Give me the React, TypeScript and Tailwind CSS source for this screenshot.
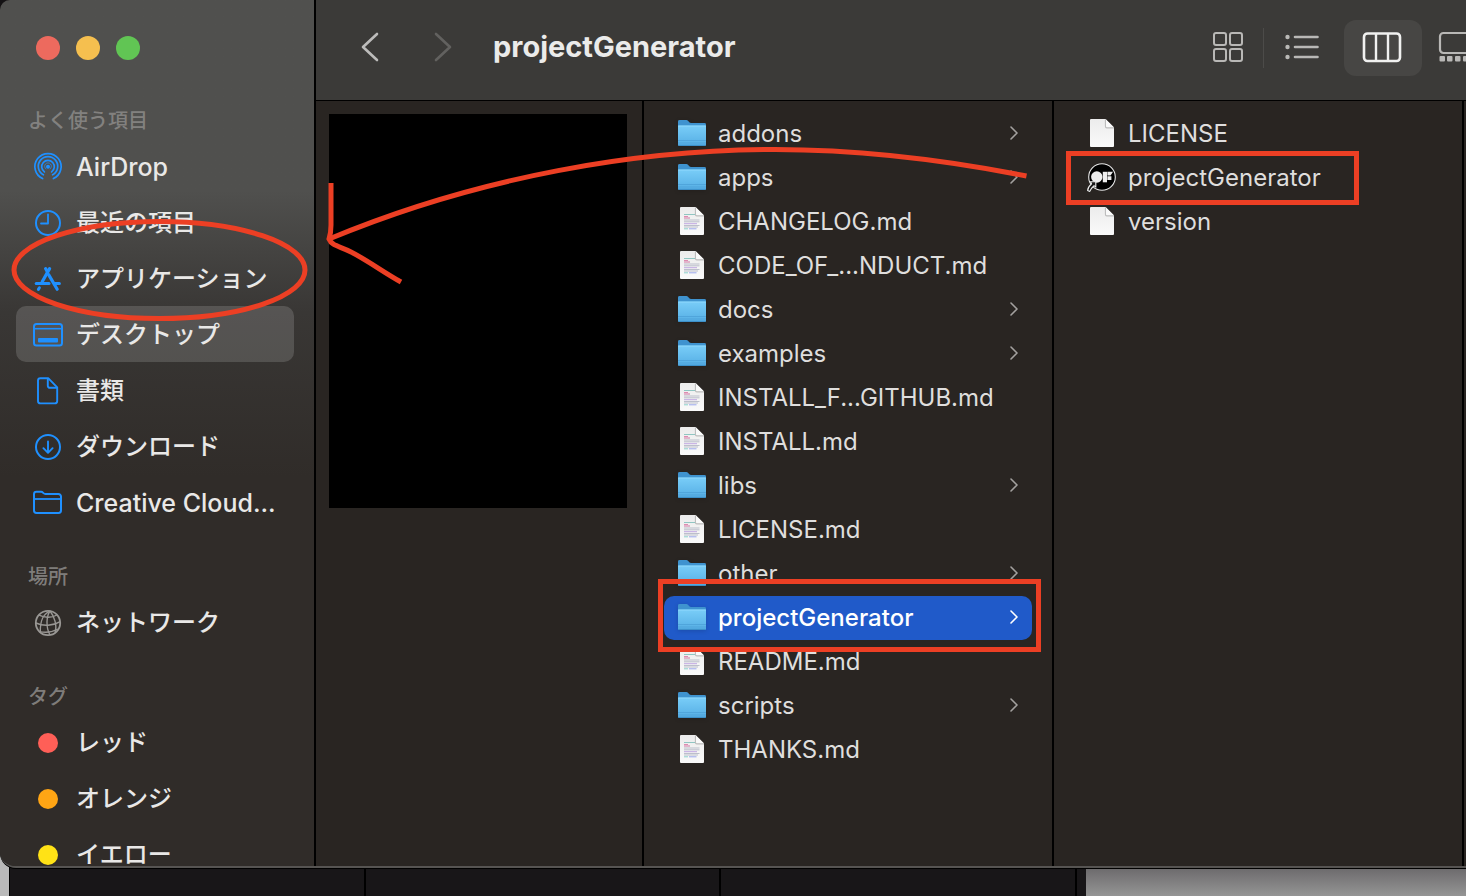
import type { ReactNode } from "react";

function Svg({ w, h, children, className = "" }: { w: number; h: number; children: ReactNode; className?: string }) {
  return (
    <svg width={w} height={h} viewBox={`0 0 ${w} ${h}`} fill="none" aria-hidden="true" className={`shrink-0 ${className}`}>
      {children}
    </svg>
  );
}

/* ---------- sidebar icons, all on a 32 x 32 grid ---------- */

const airdrop = (
  <Svg w={32} h={32}>
    <g stroke="currentColor" strokeWidth="1.7" strokeLinecap="round">
      <path d="M10.6 27.6A13.1 13.1 0 1 1 21.4 27.6" />
      <path d="M11.4 23.8A9.7 9.7 0 1 1 20.6 23.8" />
      <path d="M12.4 20.9A6.3 6.3 0 1 1 19.6 20.9" />
      <path d="M13.9 18A3.4 3.4 0 1 1 18.1 18" strokeWidth="1" strokeOpacity="0.7" />
    </g>
    <circle cx="16" cy="15.8" r="2" fill="currentColor" />
  </Svg>
);

const clock = (
  <Svg w={32} h={32}>
    <circle cx="16" cy="16" r="12" stroke="currentColor" strokeWidth="2" />
    <path d="M16 7.5V16.5H9" stroke="currentColor" strokeWidth="1.8" strokeLinecap="round" strokeLinejoin="round" />
  </Svg>
);

const appStore = (
  <Svg w={32} h={32}>
    <g stroke="currentColor" strokeWidth="3.2" strokeLinecap="round">
      <path d="M17.6 5.6L10.2 18.8" />
      <path d="M13.6 5.6L14.9 8" />
      <path d="M16.6 11.6L25.2 26.2" />
      <path d="M4.2 20.4H17" strokeWidth="3" />
      <path d="M22.6 20.4H27.4" strokeWidth="3" />
      <path d="M7.4 24.8L6.4 26.4" strokeWidth="3" />
    </g>
  </Svg>
);

const desktop = (
  <Svg w={32} h={32}>
    <rect x="2" y="5" width="28" height="21.5" rx="2.5" stroke="currentColor" strokeWidth="2" />
    <path d="M2 9.7H30" stroke="currentColor" strokeWidth="1.6" />
    <rect x="6" y="19" width="20" height="4.4" rx="1" fill="currentColor" />
  </Svg>
);

const documentIcon = (
  <Svg w={32} h={32}>
    <g stroke="currentColor" strokeWidth="1.9" strokeLinejoin="round">
      <path d="M8.4 3.2H16.2L25.2 12.4V26a2.4 2.4 0 0 1-2.4 2.4H8.4A2.4 2.4 0 0 1 6 26V5.6a2.4 2.4 0 0 1 2.4-2.4Z" />
      <path d="M15.8 3.4V10.8a2 2 0 0 0 2 2H25" />
    </g>
  </Svg>
);

const download = (
  <Svg w={32} h={32}>
    <circle cx="16" cy="16" r="12" stroke="currentColor" strokeWidth="2" />
    <path d="M16 10.4V21.6M11.4 17.2L16 21.8L20.6 17.2" stroke="currentColor" strokeWidth="1.9" strokeLinecap="round" strokeLinejoin="round" />
  </Svg>
);

const folderOutline = (
  <Svg w={32} h={32}>
    <path
      d="M2 7.2A2.4 2.4 0 0 1 4.4 4.8H9.2c1.8 0 2.2 2.2 4.2 2.2H26.4A2.6 2.6 0 0 1 29 9.6V23.6A2.4 2.4 0 0 1 26.6 26H4.4A2.4 2.4 0 0 1 2 23.6Z"
      stroke="currentColor"
      strokeWidth="2"
    />
    <path d="M2 12H29" stroke="currentColor" strokeWidth="1.8" />
  </Svg>
);

const network = (
  <Svg w={32} h={32} className="text-[#999794]">
    <g stroke="currentColor" strokeWidth="1.4">
      <circle cx="16" cy="16" r="12.2" strokeWidth="1.8" />
      <path d="M18 4C11.5 7 8 12.500 8.300 25.400" />
      <path d="M18 4C14.500 9 13.500 20 18 28" />
      <path d="M18 4C22 9 25.500 18 23 25.600" />
      <path d="M7 8.200C12 10.600 19.500 11.400 24.800 8" />
      <path d="M4 16C11 19.500 21 19 28.200 14.600" />
      <path d="M7.400 24.600C12 25.600 20 25.400 25.800 22" />
    </g>
  </Svg>
);

function TagDot({ className }: { className: string }) {
  return (
    <span className="flex size-8 shrink-0 items-center justify-center">
      <span className={`size-5 rounded-full ${className}`} />
    </span>
  );
}

type SideItem = { label: string; icon: ReactNode; active?: boolean; latin?: boolean };

const sections: { title: string; items: SideItem[] }[] = [
  {
    title: "よく使う項目",
    items: [
      { label: "AirDrop", icon: airdrop, latin: true },
      { label: "最近の項目", icon: clock },
      { label: "アプリケーション", icon: appStore },
      { label: "デスクトップ", icon: desktop, active: true },
      { label: "書類", icon: documentIcon },
      { label: "ダウンロード", icon: download },
      { label: "Creative Cloud...", icon: folderOutline, latin: true },
    ],
  },
  { title: "場所", items: [{ label: "ネットワーク", icon: network }] },
  {
    title: "タグ",
    items: [
      { label: "レッド", icon: <TagDot className="bg-[#ff5f57]" /> },
      { label: "オレンジ", icon: <TagDot className="bg-[#ffa514]" /> },
      { label: "イエロー", icon: <TagDot className="bg-[#ffe216]" /> },
    ],
  },
];

function Sidebar() {
  return (
    <aside className="flex w-[316px] shrink-0 flex-col overflow-hidden border-r-2 border-black bg-linear-to-b from-[#50504e] from-22% via-[#393735] via-36% to-[#302c29] to-55%">
      <div className="flex h-[102px] shrink-0 items-start gap-4 px-9 pt-9">
        <button aria-label="閉じる" className="size-6 rounded-full bg-[#ed6a5e]" />
        <button aria-label="しまう" className="size-6 rounded-full bg-[#f5bf4f]" />
        <button aria-label="拡大" className="size-6 rounded-full bg-[#61c554]" />
      </div>
      <nav className="flex flex-col gap-7">
        {sections.map((section) => (
          <section key={section.title}>
            <h2 className="flex h-9 items-center pt-0.5 pl-7 text-[20px] font-medium text-[#8a8886]/90">{section.title}</h2>
            <ul>
              {section.items.map((item) => (
                <li key={item.label} className="pr-5 pl-4">
                  <a
                    href="#"
                    className={`flex h-14 items-center gap-3 rounded-[10px] pt-0.5 pl-4 font-medium whitespace-nowrap text-[#e9e8e7] ${
                      item.latin ? "text-[25px]/5" : "text-[24px]/5"
                    } ${item.active ? "bg-white/15" : ""}`}
                  >
                    <span className="text-[#1f90ff]">{item.icon}</span>
                    {item.label}
                  </a>
                </li>
              ))}
            </ul>
          </section>
        ))}
      </nav>
    </aside>
  );
}

/* ---------- file icons, 28 x 28 ---------- */

function FolderIcon() {
  return (
    <Svg w={28} h={28} className="mb-0.5 drop-shadow-sm">
      <path d="M0 2.500A1.500 1.500 0 0 1 1.500 1H8.500C10.500 1 10.800 4 13 4H26.500A1.500 1.500 0 0 1 28 5.500V12H0Z" fill="#3f93cf" />
      <path d="M0 7.600Q0 6.600 1 6.600H27Q28 6.600 28 7.600V25.500A1.500 1.500 0 0 1 26.500 27H1.500A1.500 1.500 0 0 1 0 25.500Z" fill="url(#folderFront)" />
      <path d="M0 7.100H28" stroke="#8ed7fb" strokeWidth="1" />
      <path d="M0 21.500H28M0 24H28" stroke="#4a9ed6" strokeWidth="0.7" />
      <path d="M0.500 26.400H27.500" stroke="#3d90c9" strokeWidth="1.200" />
    </Svg>
  );
}

function PageIcon({ lines = false }: { lines?: boolean }) {
  return (
    <Svg w={28} h={28} className="mb-0.5">
      <path d="M3 0H17.500L26 8.500V27Q26 28 25 28H3Q2 28 2 27V1Q2 0 3 0Z" fill="url(#pageFill)" />
      <path d="M17.500 0.500V7.500Q17.500 8.800 18.800 8.800H26" stroke="#bdbdbd" strokeWidth="1.200" />
      <path d="M18 0.600L25.600 8H19Q18 8 18 7Z" fill="#fafafa" />
      {lines && (
        <g strokeWidth="0.900" strokeOpacity="0.85">
          <path d="M6 7.500H17" stroke="#72b8b4" />
          <path d="M6 9.500H10" stroke="#d76a9c" />
          <path d="M6 11H12" stroke="#c9508c" />
          <path d="M6 13H21.500M6 14.800H21.500M6 18.500H21.500M6 20H20" stroke="#a9adbd" />
          <path d="M6 16.700H19" stroke="#b08edb" />
          <path d="M6 21.800H10" stroke="#6cc5bd" />
          <path d="M11 21.800H18.500" stroke="#7e8fe8" />
        </g>
      )}
    </Svg>
  );
}

function AppIcon() {
  return (
    <Svg w={28} h={28} className="mb-0.5 overflow-visible">
      <circle cx="14" cy="14" r="13.300" fill="#000" stroke="#e8e8e8" strokeWidth="1.100" />
      <circle cx="8.800" cy="14" r="5.700" fill="#eee" />
      <rect x="14.800" y="8.800" width="4.200" height="10.500" fill="#eee" />
      <path d="M19.400 8.800H25L22.600 12.600H19.400ZM19.400 13.200H23.400V17H19.400Z" fill="#eee" />
      <path
        d="M2.400 18.800H7.800V24.200L6 22.700C4.400 24 3 25.600 1.800 28.400L-0.400 27.600C-0.200 24.800 1.400 22.600 3.600 20.800Z"
        fill="#171717"
        stroke="#eee"
        strokeWidth="1.100"
        strokeLinejoin="round"
      />
    </Svg>
  );
}

type Kind = "folder" | "md" | "page" | "app";
type Entry = { name: string; kind: Kind; selected?: boolean };

const folderEntries: Entry[] = [
  { name: "addons", kind: "folder" },
  { name: "apps", kind: "folder" },
  { name: "CHANGELOG.md", kind: "md" },
  { name: "CODE_OF_...NDUCT.md", kind: "md" },
  { name: "docs", kind: "folder" },
  { name: "examples", kind: "folder" },
  { name: "INSTALL_F...GITHUB.md", kind: "md" },
  { name: "INSTALL.md", kind: "md" },
  { name: "libs", kind: "folder" },
  { name: "LICENSE.md", kind: "md" },
  { name: "other", kind: "folder" },
  { name: "projectGenerator", kind: "folder", selected: true },
  { name: "README.md", kind: "md" },
  { name: "scripts", kind: "folder" },
  { name: "THANKS.md", kind: "md" },
];

const generatorEntries: Entry[] = [
  { name: "LICENSE", kind: "page" },
  { name: "projectGenerator", kind: "app" },
  { name: "version", kind: "page" },
];

function EntryIcon({ kind }: { kind: Kind }) {
  if (kind === "folder") return <FolderIcon />;
  if (kind === "app") return <AppIcon />;
  return <PageIcon lines={kind === "md"} />;
}

function FileColumn({ entries }: { entries: Entry[] }) {
  return (
    <ul className="min-w-0 flex-1 overflow-hidden border-r-2 border-black px-5 pt-[11px]">
      {entries.map((entry) => (
        <li key={entry.name}>
          <button
            className={`flex h-11 w-full items-center gap-3 rounded-[10px] px-3.5 text-left text-2xl whitespace-nowrap ${
              entry.selected ? "bg-[#205ac9] font-medium text-white" : "text-[#dfdedd]"
            }`}
          >
            <EntryIcon kind={entry.kind} />
            <span className="flex-1">{entry.name}</span>
            {entry.kind === "folder" && (
              <Svg w={8} h={14} className={`mb-0.5 ${entry.selected ? "text-white" : "text-[#a3a19f]"}`}>
                <path d="M1 1L7 7L1 13" stroke="currentColor" strokeWidth="1.600" strokeLinecap="round" strokeLinejoin="round" />
              </Svg>
            )}
          </button>
        </li>
      ))}
    </ul>
  );
}

function Toolbar() {
  return (
    <header className="flex h-[101px] shrink-0 items-start overflow-hidden border-b border-black bg-[#3b3a38] pt-5">
      <button aria-label="戻る" className="ml-7 flex h-14 w-[52px] items-center justify-center pb-0.5 text-[#bdbcbb]">
        <Svg w={18} h={30}>
          <path d="M16 2L2 15L16 28" stroke="currentColor" strokeWidth="2.600" strokeLinecap="round" strokeLinejoin="round" />
        </Svg>
      </button>
      <button aria-label="進む" disabled className="ml-[21px] flex h-14 w-[52px] items-center justify-center pb-0.5 text-[#62615f]">
        <Svg w={18} h={30}>
          <path d="M2 2L16 15L2 28" stroke="currentColor" strokeWidth="2.600" strokeLinecap="round" strokeLinejoin="round" />
        </Svg>
      </button>
      <h1 className="ml-6 flex h-14 items-center pb-0.5 text-[29px] font-bold text-[#ebebea]">projectGenerator</h1>
      <div className="ml-auto flex h-14 items-center text-[#b9b8b6]">
        <button aria-label="アイコン表示" className="flex h-14 w-[70px] items-center justify-center pb-0.5">
          <Svg w={32} h={32}>
            <g stroke="currentColor" strokeWidth="2">
              <rect x="2" y="2" width="12" height="12" rx="2" />
              <rect x="18" y="2" width="12" height="12" rx="2" />
              <rect x="2" y="18" width="12" height="12" rx="2" />
              <rect x="18" y="18" width="12" height="12" rx="2" />
            </g>
          </Svg>
        </button>
        <span className="h-10 w-px bg-[#4c4b49]" />
        <button aria-label="リスト表示" className="mr-1 flex h-14 w-[76px] items-center justify-center pb-0.5">
          <Svg w={34} h={26}>
            <g fill="currentColor">
              <circle cx="2.500" cy="3" r="2.200" />
              <circle cx="2.500" cy="13" r="2.200" />
              <circle cx="2.500" cy="23" r="2.200" />
            </g>
            <path d="M10 3H32.500M10 13H32.500M10 23H32.500" stroke="currentColor" strokeWidth="2.600" strokeLinecap="round" />
          </Svg>
        </button>
        <button
          aria-label="カラム表示"
          aria-pressed="true"
          className="flex h-14 w-[78px] items-center justify-center rounded-xl bg-[#474644] pr-0.5 pb-0.5 text-[#f1f1f0]"
        >
          <Svg w={40} h={32}>
            <rect x="2" y="2.500" width="36" height="27.500" rx="3.500" stroke="currentColor" strokeWidth="2.600" />
            <path d="M14 2V30M26 2V30" stroke="currentColor" strokeWidth="2.400" />
          </Svg>
        </button>
        <button aria-label="ギャラリー表示" className="flex h-14 w-11 items-center overflow-hidden pb-0.5 pl-4">
          <Svg w={40} h={32}>
            <rect x="2" y="2" width="37" height="20" rx="3.500" stroke="currentColor" strokeWidth="2.200" />
            <g fill="currentColor">
              <rect x="1.500" y="25" width="5.500" height="5.500" rx="1" />
              <rect x="9" y="25" width="5.500" height="5.500" rx="1" />
              <rect x="17" y="25" width="5.500" height="5.500" rx="1" />
              <rect x="25" y="25" width="5.500" height="5.500" rx="1" />
            </g>
          </Svg>
        </button>
      </div>
    </header>
  );
}

/* Red marker strokes drawn over the window. */
function Annotations() {
  return (
    <svg
      width="1466"
      height="896"
      viewBox="0 0 1466 896"
      fill="none"
      stroke="#ec3f24"
      strokeWidth="5"
      aria-hidden="true"
      className="pointer-events-none absolute top-0 left-0 z-20"
    >
      <ellipse cx="159.500" cy="270" rx="145.500" ry="48.500" />
      <rect x="660.500" y="581.500" width="378" height="68" />
      <rect x="1068.500" y="153.500" width="288" height="49" />
      <path d="M1026.500 176C940 159 855 149.500 775 149.500C640 149.500 480 176 329 239" />
      <path d="M331 183V225C331 232 330 236 329 239C332 246 339 246 351 252C367 260 383 272 401 282" />
    </svg>
  );
}

export default function App() {
  return (
    <div className="relative flex h-screen flex-col overflow-hidden bg-[#141214] font-['Inter','Noto_Sans_CJK_JP',sans-serif]">
      <svg width="0" height="0" className="absolute" aria-hidden="true">
        <defs>
          <linearGradient id="folderFront" x1="0" y1="0" x2="0" y2="1">
            <stop offset="0" stopColor="#79cdf8" />
            <stop offset="1" stopColor="#55aee4" />
          </linearGradient>
          <linearGradient id="pageFill" x1="0" y1="0" x2="0" y2="1">
            <stop offset="0" stopColor="#ececec" />
            <stop offset="1" stopColor="#fafafa" />
          </linearGradient>
        </defs>
      </svg>

      <main className="relative z-10 flex min-h-0 flex-1 overflow-hidden rounded-tl-[10px] rounded-bl-2xl border-b-2 border-[#565452] bg-[#292522] shadow-[0_1px_0_#000]">
        <Sidebar />
        <div className="flex min-w-0 flex-1 flex-col">
          <Toolbar />
          <div className="flex min-h-0 flex-1">
            <div className="w-[328px] shrink-0 border-r-2 border-black pt-[13px] pr-[15px] pl-[13px]">
              <div className="h-[394px] bg-black" />
            </div>
            <FileColumn entries={folderEntries} />
            <FileColumn entries={generatorEntries} />
            <div className="w-0.5 shrink-0" />
          </div>
        </div>
      </main>

      <div className="-mt-5 flex h-12 shrink-0">
        <div className="w-2.5 border-r border-black bg-[#b9b9b9]" />
        <div className="w-[356px] border-r-2 border-black bg-[#181618]" />
        <div className="w-[355px] border-r-2 border-black bg-[#181618]" />
        <div className="w-[356px] border-r-2 border-black bg-[#181618]" />
        <div className="w-[9px] bg-[#181618]" />
        <div className="flex-1 bg-linear-to-b from-[#6b696b] from-40% to-[#959595]" />
      </div>

      <Annotations />
    </div>
  );
}
